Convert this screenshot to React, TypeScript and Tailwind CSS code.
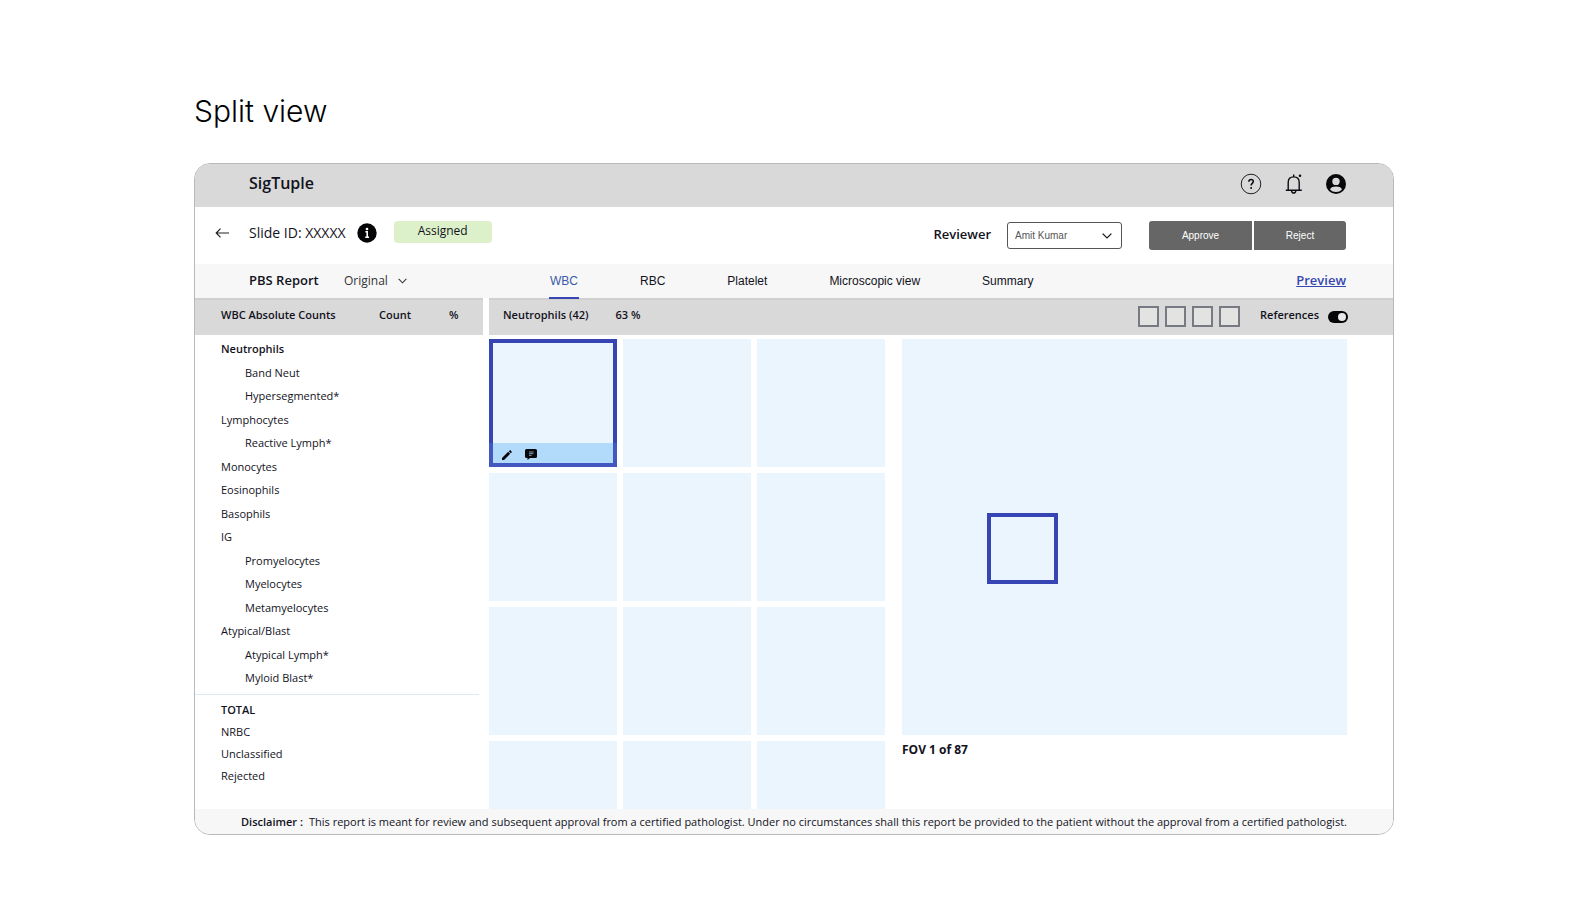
import React, { useState } from 'react';

interface CellRow {
  name: string;
  indent?: boolean;
  bold?: boolean;
}

const cellRows: CellRow[] = [
  { name: 'Neutrophils', bold: true },
  { name: 'Band Neut', indent: true },
  { name: 'Hypersegmented*', indent: true },
  { name: 'Lymphocytes' },
  { name: 'Reactive Lymph*', indent: true },
  { name: 'Monocytes' },
  { name: 'Eosinophils' },
  { name: 'Basophils' },
  { name: 'IG' },
  { name: 'Promyelocytes', indent: true },
  { name: 'Myelocytes', indent: true },
  { name: 'Metamyelocytes', indent: true },
  { name: 'Atypical/Blast' },
  { name: 'Atypical Lymph*', indent: true },
  { name: 'Myloid Blast*', indent: true },
];

const totalRows: CellRow[] = [
  { name: 'TOTAL', bold: true },
  { name: 'NRBC' },
  { name: 'Unclassified' },
  { name: 'Rejected' },
];

const tabs = ['WBC', 'RBC', 'Platelet', 'Microscopic view', 'Summary'];

const ChevronDown = ({ className }: { className: string }) => (
  <svg viewBox="0 0 10 6" className={className} fill="none" stroke="currentColor" strokeWidth="1.2" strokeLinecap="round">
    <path d="M1 1l4 4 4-4" />
  </svg>
);

const TopBar = () => (
  <header className="flex h-[43px] items-center bg-[#d9d9d9] pr-[47px] pb-[3px] pl-[54px]">
    <h2 className="flex-1 pb-0.5 text-base font-semibold">SigTuple</h2>
    <div className="flex items-center gap-[22px]">
      <button aria-label="Help">
        <svg viewBox="0 0 22 22" className="h-[22px] w-[22px]" fill="none" stroke="#0b0b12">
          <circle cx="11" cy="11" r="9.8" strokeWidth="0.9" />
          <path d="M8.8 8.8c0-1.4 1-2.3 2.3-2.3s2.2.9 2.2 2.1c0 1.7-2.2 1.9-2.2 3.9" strokeWidth="1.5" />
          <circle cx="11.1" cy="15" r="1" fill="#0b0b12" stroke="none" />
        </svg>
      </button>
      <button aria-label="Notifications">
        <svg viewBox="0 0 20 22" className="h-[22px] w-5" fill="none" stroke="#0b0b12" strokeWidth="1.4">
          <path d="M1.8 17.2h16M4.2 17V9.5C4.2 6 6.5 3.9 9.7 3.9s5.5 2.1 5.5 5.6V17" />
          <path d="M9.7 1.6v2.2M7.6 17.8c.2 1.5 1 2.2 2.1 2.2s1.9-.7 2.1-2.2" />
          <circle cx="16" cy="2.8" r="1.3" fill="#0b0b12" stroke="none" />
        </svg>
      </button>
      <button aria-label="Account">
        <svg viewBox="0 0 20 20" className="h-5 w-5">
          <circle cx="10" cy="10" r="10" fill="#08080c" />
          <circle cx="10" cy="7.4" r="3.7" fill="#d9d9d9" />
          <path d="M4 15.4c1-2.2 3.2-2.9 6-2.9s5 .7 6 2.9c-1.5 1.7-3.6 2.5-6 2.5s-4.5-.8-6-2.5z" fill="#d9d9d9" />
        </svg>
      </button>
    </div>
  </header>
);

const SlideBar = () => (
  <div className="flex h-[57px] items-center pr-[47px] pl-5">
    <button aria-label="Back" className="w-[34px] pb-1.5">
      <svg viewBox="0 0 14 10" className="h-[10px] w-[14px]" fill="none" stroke="#222" strokeWidth="1.2">
        <path d="M14 5H1.2M5.5.7L1.2 5l4.3 4.3" />
      </svg>
    </button>
    <span className="pb-1.5 text-sm">Slide ID: XXXXX</span>
    <button aria-label="Slide info" className="ml-[11px] pb-1.5">
      <svg viewBox="0 0 20 20" className="h-5 w-5">
        <circle cx="10" cy="10" r="9.7" fill="#050508" />
        <circle cx="10" cy="6" r="1.3" fill="#fff" />
        <path d="M8.4 8.7h1.8v5M8.2 14.3h3.8" stroke="#fff" strokeWidth="1.6" fill="none" />
      </svg>
    </button>
    <span className="mb-[7px] ml-[17px] flex h-[22px] w-[98px] items-center justify-center rounded bg-[#dcf1c9] pb-0.5 text-xs">
      Assigned
    </span>
    <label htmlFor="reviewer" className="ml-auto pb-0.5 text-[13px] font-semibold">Reviewer</label>
    <div className="relative ml-4">
      <select
        id="reviewer"
        className="block h-[27px] w-[115px] appearance-none rounded-[3px] border border-[#555] bg-white pl-[7px] font-['Liberation_Sans',sans-serif] text-[10px] text-[#555]"
      >
        <option>Amit Kumar</option>
      </select>
      <ChevronDown className="pointer-events-none absolute top-[11px] right-[10px] h-[6px] w-[10px] text-[#222]" />
    </div>
    <div className="ml-[27px] flex gap-[2px] font-['Liberation_Sans',sans-serif] text-[10px] text-white">
      <button className="h-[29px] w-[103px] rounded-l-[3px] bg-[#666]">Approve</button>
      <button className="h-[29px] w-[92px] rounded-r-[3px] bg-[#666]">Reject</button>
    </div>
  </div>
);

const TabBar = ({ active, onSelect }: { active: string; onSelect: (tab: string) => void }) => (
  <nav className="relative z-10 flex h-[34px] items-center bg-[#f7f7f7] pr-[47px] pl-[54px]">
    <span className="w-[95px] text-[13px] font-semibold">PBS Report</span>
    <button className="flex w-[205px] items-center gap-[10px] text-xs text-[#333]">
      Original
      <ChevronDown className="h-[6px] w-[9px]" />
    </button>
    <div className="flex h-full gap-[60px] font-['Liberation_Sans',sans-serif] text-xs">
      {tabs.map(tab => (
        <button
          key={tab}
          onClick={() => onSelect(tab)}
          className={`h-[35px] border-b-2 px-px ${tab === active ? 'border-[#3644b4] text-[#3a5ba8]' : 'border-transparent'}`}
        >
          {tab}
        </button>
      ))}
    </div>
    <a href="#preview" className="ml-auto text-[13px] font-semibold text-[#3548ae] underline">Preview</a>
  </nav>
);

const Rows = ({ rows, rowClass }: { rows: CellRow[]; rowClass: string }) => (
  <>
    {rows.map(row => (
      <tr key={row.name} className={rowClass}>
        <th
          scope="row"
          className={`${row.indent ? 'pl-[50px]' : 'pl-[26px]'} ${row.bold ? 'font-semibold' : 'font-normal'} text-left`}
        >
          {row.name}
        </th>
        <td />
        <td />
      </tr>
    ))}
  </>
);

const CountsPanel = () => (
  <aside className="w-[288px] shrink-0 text-[11px]">
    <table className="w-full table-fixed">
      <thead>
        <tr className="h-[37px] bg-[#d9d9d9] text-left shadow-[inset_0_2px_0_#d0d0d0]">
          <th className="w-[184px] pb-0.5 pl-[26px] font-semibold">WBC Absolute Counts</th>
          <th className="w-[70px] pb-0.5 font-semibold">Count</th>
          <th className="pb-0.5 font-semibold">%</th>
        </tr>
      </thead>
      <tbody>
        <tr className="h-[3px]"><td colSpan={3} /></tr>
        <Rows rows={cellRows} rowClass="even:h-[23px] odd:h-[24px]" />
      </tbody>
    </table>
    <div className="mt-1 mr-1 border-t border-[#dfe9f5] pt-1">
      <table className="w-full table-fixed">
        <tbody>
          <Rows rows={totalRows} rowClass="h-[22px]" />
        </tbody>
      </table>
    </div>
  </aside>
);

const CellGrid = () => (
  <div className="grid w-[396px] shrink-0 grid-cols-3 gap-[6px]">
    <div className="flex aspect-square flex-col justify-end border-4 border-[#3644b4] bg-[#eaf5fe]">
      <div className="-mx-1 -mb-1 flex h-6 items-center gap-[13px] border-x-4 border-b-4 border-[#4258c0] bg-[#b2dafa] pt-[3px] pl-[9px]">
        <button aria-label="Edit cell">
          <svg viewBox="0 0 10 10" className="h-[10px] w-[10px]" fill="#08080c">
            <path d="M0 8l6.200-6.200 2 2L2 10H0zM6.800 1.300L8.100 0 10 1.900 8.700 3.200z" />
          </svg>
        </button>
        <button aria-label="Comment on cell">
          <svg viewBox="0 0 12 11" className="h-[11px] w-3">
            <path d="M1.500 0h9A1.500 1.500 0 0 1 12 1.500v6A1.500 1.500 0 0 1 10.500 9H5l-2.500 2V9h-1A1.500 1.500 0 0 1 0 7.500v-6A1.500 1.500 0 0 1 1.500 0z" fill="#08080c" />
            <path d="M4 3h4.500M4 4.700h4.500M4 6.400h2.500" stroke="#b2dafa" strokeWidth="0.700" />
          </svg>
        </button>
      </div>
    </div>
    {Array.from({ length: 8 }, (_, i) => (
      <div key={i} className="aspect-square bg-[#eaf5fe]" />
    ))}
    {Array.from({ length: 3 }, (_, i) => (
      <div key={i} className="h-[68px] bg-[#eaf5fe]" />
    ))}
  </div>
);

const App: React.FC = () => {
  const [activeTab, setActiveTab] = useState('WBC');
  const [references, setReferences] = useState(true);

  return (
    <main className="min-h-screen bg-white pt-[88px] pr-[193px] pb-[88px] pl-[194px] font-['Open_Sans',sans-serif] text-[#12121c]">
      <h1 className="mb-[29px] font-['Inter',sans-serif] text-[30px] leading-[46px] font-light text-black">Split view</h1>

      <div className="overflow-hidden rounded-2xl border border-[#b9b9b9]">
        <TopBar />
        <SlideBar />
        <TabBar active={activeTab} onSelect={setActiveTab} />

        <div className="flex gap-[6px]">
          <CountsPanel />
          <section className="min-w-0 flex-1">
            <div className="flex h-[37px] items-center bg-[#d9d9d9] pr-[45px] pl-[14px] text-[11px] font-semibold shadow-[inset_0_2px_0_#d0d0d0]">
              <span className="pb-0.5">Neutrophils (42)</span>
              <span className="ml-[27px] pb-0.5">63 %</span>
              <div className="ml-auto flex gap-[6px]">
                {['1', '2', '3', '4'].map(n => (
                  <button key={n} aria-label={`Layout ${n}`} className="h-[21px] w-[21px] border-2 border-[#777a82] bg-[#e3e3e2]" />
                ))}
              </div>
              <label htmlFor="references" className="ml-5 pb-0.5">References</label>
              <input
                id="references"
                type="checkbox"
                checked={references}
                onChange={e => setReferences(e.target.checked)}
                className="ml-[9px] flex h-3 w-5 appearance-none items-center rounded-full bg-[#050508] px-0.5 after:h-2 after:w-2 after:rounded-full after:bg-[#e8e8e8] checked:justify-end"
              />
            </div>
            <div className="flex gap-[17px] pt-1 pr-[46px]">
              <CellGrid />
              <div className="min-w-0 flex-1">
                <div className="relative h-[396px] bg-[#eaf5fe]">
                  <div className="absolute top-[174px] left-[85px] h-[71px] w-[71px] border-4 border-[#3644b4]" />
                </div>
                <p className="mt-[7px] text-xs font-bold">FOV 1 of 87</p>
              </div>
            </div>
          </section>
        </div>

        <footer className="flex h-[25px] items-center justify-center bg-[#f7f7f7] pt-0.5 text-[11px]">
          <strong className="mr-[6px] font-semibold">Disclaimer :</strong>
          <span>
            This report is meant for review and subsequent approval from a certified pathologist. Under no circumstances shall this report be provided to the patient without the approval from a certified pathologist.
          </span>
        </footer>
      </div>
    </main>
  );
};

export default App;
